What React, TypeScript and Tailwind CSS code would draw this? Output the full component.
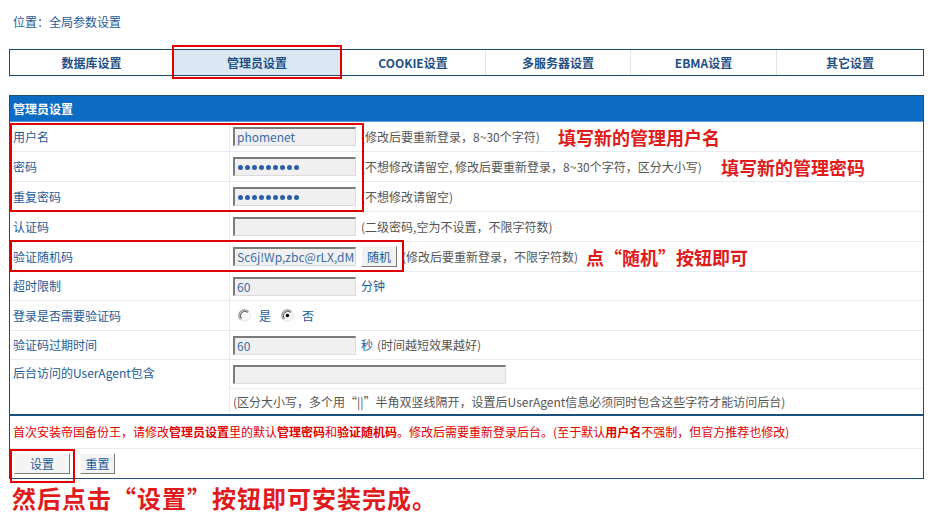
import React from "react";

const FONT = { fontFamily: '"Noto Sans CJK SC", "Noto Sans", sans-serif' };

function Field({ w = "w-[123px]", children }: { w?: string; children?: React.ReactNode }) {
  return (
    <div
      className={`${w} h-[19px] shrink-0 overflow-hidden whitespace-nowrap bg-[#f0f0f0] border-t-2 border-l-2 border-t-[#7b7b7b] border-l-[#7b7b7b] border-b border-r border-b-[#dcdcdc] border-r-[#dcdcdc] pl-[2px] text-[12px] leading-[16px] text-[#3d6ea6] flex items-center`}
    >
      {children}
    </div>
  );
}

function Dots() {
  return (
    <div className="flex items-center gap-[2px] pl-[1px]">
      {Array.from({ length: 9 }).map((_, i) => (
        <span key={i} className="w-[5px] h-[5px] rounded-full bg-[#2b5ea8]" />
      ))}
    </div>
  );
}

function Radio({ checked }: { checked?: boolean }) {
  return (
    <svg width="13" height="13" viewBox="0 0 13 13" className="shrink-0">
      <circle cx="6.5" cy="6.5" r="5.6" fill="#fafafa" stroke="#e2e2e2" strokeWidth="1" />
      <path d="M2.5 10.5 A5.6 5.6 0 0 1 10.5 2.5" stroke="#9a9a9a" strokeWidth="1.2" fill="none" />
      <path d="M3.4 9.6 A4.4 4.4 0 0 1 9.6 3.4" stroke="#444" strokeWidth="1" fill="none" />
      {checked && <circle cx="6.5" cy="6.5" r="1.8" fill="#000" />}
    </svg>
  );
}

function Row({
  label,
  h,
  children,
}: {
  label: React.ReactNode;
  h: string;
  children: React.ReactNode;
}) {
  return (
    <div className={`flex ${h} border-b border-[#e3ebf3]`}>
      <div className="w-[220px] shrink-0 border-r border-[#e3ebf3] pl-[3px] flex items-center text-[#1d5b98]">
        {label}
      </div>
      <div className="flex-1 pl-[3px] flex items-center">{children}</div>
    </div>
  );
}

const Hint = ({ children, ml = "ml-[5px]" }: { children: React.ReactNode; ml?: string }) => (
  <span className={`${ml} text-[#555] whitespace-nowrap`}>{children}</span>
);

export default function App() {
  const tabs: [string, string, boolean][] = [
    ["数据库设置", "w-[163px]", false],
    ["管理员设置", "w-[167px]", true],
    ["COOKIE设置", "w-[145px]", false],
    ["多服务器设置", "w-[145px]", false],
    ["EBMA设置", "w-[146px]", false],
    ["其它设置", "w-[147px]", false],
  ];
  return (
    <div className="relative w-[935px] h-[527px] bg-white overflow-hidden text-[12px] leading-[16px]" style={FONT}>
      {/* breadcrumb */}
      <div className="h-[49px] pl-[13px] pt-[14px] text-[#1d5b98]">位置：全局参数设置</div>

      {/* tabs */}
      <div className="ml-[9px] w-[915px] h-[27px] border border-[#1b4a6e] flex">
        {tabs.map(([t, w, active], i) => (
          <div
            key={t}
            className={`${w} h-full flex items-center justify-center font-bold text-[#1f4f84] ${
              i > 0 ? "border-l border-[#dde5ec]" : ""
            } ${active ? "bg-[#dbe8f3]" : ""}`}
          >
            {t}
          </div>
        ))}
      </div>

      {/* main table */}
      <div className="ml-[9px] mt-[19px] w-[915px] border border-[#1d4f78]">
        <div className="h-[26px] bg-[#0c6cc4] border-b border-[#5a9ad6] pl-[3px] flex items-center text-white font-bold">
          管理员设置
        </div>

        <Row label="用户名" h="h-[30px]">
          <Field>phomenet</Field>
          <Hint>(修改后要重新登录，8~30个字符)</Hint>
        </Row>
        <Row label="密码" h="h-[30px]">
          <Field>
            <Dots />
          </Field>
          <Hint>(不想修改请留空, 修改后要重新登录，8~30个字符，区分大小写)</Hint>
        </Row>
        <Row label="重复密码" h="h-[30px]">
          <Field>
            <Dots />
          </Field>
          <Hint>(不想修改请留空)</Hint>
        </Row>
        <Row label="认证码" h="h-[30px]">
          <Field />
          <Hint>(二级密码,空为不设置，不限字符数)</Hint>
        </Row>
        <Row label="验证随机码" h="h-[30px]">
          <Field>Sc6j!Wp,zbc@rLX,dM'</Field>
          <button className="ml-[5px] w-[36px] h-[21px] bg-[#f2f2f2] border border-t-white border-l-white border-b-[#7a7a7a] border-r-[#7a7a7a] text-[#1d5b98] text-[12px] leading-[16px]">
            随机
          </button>
          <Hint>(修改后要重新登录，不限字符数)</Hint>
        </Row>
        <Row label="超时限制" h="h-[29px]">
          <Field>60</Field>
          <span className="ml-[5px] text-[#1d5b98]">分钟</span>
        </Row>
        <Row label="登录是否需要验证码" h="h-[30px]">
          <div className="flex items-center pl-[5px] text-[#1d5b98]">
            <Radio />
            <span className="ml-[8px]">是</span>
            <span className="ml-[10px] flex items-center">
              <Radio checked />
            </span>
            <span className="ml-[8px]">否</span>
          </div>
        </Row>
        <Row label="验证码过期时间" h="h-[29px]">
          <Field>60</Field>
          <span className="ml-[5px] text-[#1d5b98]">秒</span>
          <Hint ml="ml-[4px]">(时间越短效果越好)</Hint>
        </Row>
        <div className="flex h-[54px]">
          <div className="w-[220px] shrink-0 border-r border-[#e3ebf3] pl-[3px] pt-[5px] text-[#1d5b98]">
            后台访问的UserAgent包含
          </div>
          <div className="flex-1 flex flex-col">
            <div className="h-[29px] border-b border-[#e3ebf3] pl-[3px] flex items-center">
              <Field w="w-[273px]" />
            </div>
            <div className="flex-1 pl-[3px] flex items-center text-[#555] whitespace-nowrap">
              (区分大小写，多个用“||”半角双竖线隔开，设置后UserAgent信息必须同时包含这些字符才能访问后台)
            </div>
          </div>
        </div>

        <div className="h-[35px] border-t-2 border-[#1d4f78] border-b border-b-[#e3ebf3] pl-[3px] flex items-center text-[#e00000] whitespace-nowrap">
          首次安装帝国备份王，请修改<b>管理员设置</b>里的默认<b>管理密码</b>和<b>验证随机码</b>。修改后需要重新登录后台。(至于默认<b>用户名</b>不强制，但官方推荐也修改)
        </div>
        <div className="h-[29px] pl-[4px] flex items-center gap-[10px]">
          <button className="w-[56px] h-[21px] bg-[#f4f4f4] border border-t-white border-l-white border-b-[#7a7a7a] border-r-[#7a7a7a] text-[#1d5b98] text-[12px] leading-[16px]">
            设置
          </button>
          <button className="w-[35px] h-[21px] bg-[#f4f4f4] border border-t-white border-l-white border-b-[#7a7a7a] border-r-[#7a7a7a] text-[#1d5b98] text-[12px] leading-[16px]">
            重置
          </button>
        </div>
      </div>

      <div className="pl-[12px] pt-[3px] text-[24px] leading-[32px] font-bold text-[#e01b1b] tracking-[1px]">
        然后点击“设置”按钮即可安装完成。
      </div>

      {/* annotations overlay */}
      <div className="absolute left-[172px] top-[45px] w-[170px] h-[34px] border-2 border-[#e00000]" />
      <div className="absolute left-[10px] top-[123px] w-[354px] h-[89px] border-2 border-[#e00000]" />
      <div className="absolute left-[10px] top-[240px] w-[394px] h-[32px] border-2 border-[#e00000]" />
      <div className="absolute left-[10px] top-[449px] w-[65px] h-[34px] border-2 border-[#e00000]" />
      <div className="absolute left-[558px] top-[126px] text-[18px] leading-[22px] font-bold text-[#e01b1b] whitespace-nowrap">
        填写新的管理用户名
      </div>
      <div className="absolute left-[721px] top-[156px] text-[18px] leading-[22px] font-bold text-[#e01b1b] whitespace-nowrap">
        填写新的管理密码
      </div>
      <div className="absolute left-[586px] top-[246px] text-[18px] leading-[22px] font-bold text-[#e01b1b] whitespace-nowrap">
        点“随机”按钮即可
      </div>
    </div>
  );
}
